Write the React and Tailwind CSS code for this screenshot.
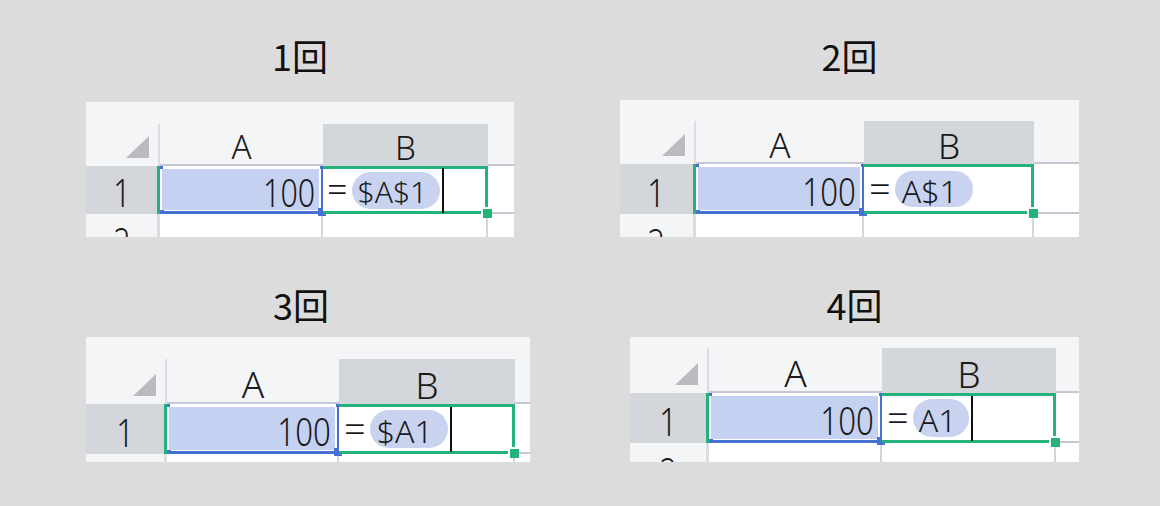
import React from "react";

const SANS = "font-['Noto_Sans','Noto_Sans_CJK_JP',sans-serif]";

function Triangle() {
  return (
    <svg width="23" height="22" viewBox="0 0 23 22" className="block">
      <polygon points="23,0 23,22 0,22" fill="#b9bbbe" />
    </svg>
  );
}

function Panel({ c }) {
  return (
    <div className={`${c.w} ${c.h} flex flex-col overflow-hidden bg-[#f4f5f7] ${SANS} font-light text-[#1a1a1a]`}>
      <div className={`${c.strip} shrink-0`} />
      {/* header row */}
      <div className={`${c.header} shrink-0 flex`}>
        <div className={`${c.rh} shrink-0 flex items-end justify-end pr-[9px] pb-[8px] border-r-2 border-[#dcdce2]`}>
          <Triangle />
        </div>
        <div className={`${c.a} shrink-0 flex items-center justify-center pt-[5px] ${c.hf} leading-none border-b-2 border-[#c6c6d4]`}>A</div>
        <div className={`${c.b} shrink-0 flex items-center justify-center pt-[5px] ${c.hf} leading-none bg-[#d3d6da]`}>B</div>
        <div className="flex-1 border-b-2 border-[#c6c6d4]" />
      </div>
      {/* row 1 */}
      <div className={`${c.row} shrink-0 flex`}>
        <div className={`${c.rh} shrink-0 flex items-center justify-center pt-[4px] bg-[#d3d6da] border-r-[3px] border-[#22b27a] ${c.vf} leading-none`}>
          <span className="inline-block scale-x-[0.8]">1</span>
        </div>
        <div className={`${c.a} shrink-0 relative bg-white border-r-2 border-b-[3px] border-[#4670d2] pl-[2px] pr-[2px] pt-[3px] pb-[1px]`}>
          <div className={`h-full bg-[#c5d1f0] flex items-center justify-end pr-[4px] pt-[4px] ${c.vf} leading-none`}>
            <span className="inline-block origin-right scale-x-[0.8]">100</span>
          </div>
          <div className="absolute left-0 top-0 w-[3px] h-[3px] bg-[#4670d2]" />
          <div className="absolute -right-[2px] top-0 w-[3px] h-[3px] bg-[#4670d2]" />
          <div className="absolute left-0 -bottom-[3px] w-[4px] h-[4px] bg-[#4670d2]" />
          <div className="absolute -right-[5px] -bottom-[5px] w-[8px] h-[8px] bg-[#4670d2]" />
        </div>
        <div className={`${c.b} shrink-0 relative bg-white border-t-[3px] border-r-[3px] border-b-[3px] border-[#22b27a]`}>
          <div className={`h-full flex items-center ${c.fpl}`}>
            <span className={`${c.ef} leading-none pb-[2px]`}>=</span>
            <span className={`${c.pill} ml-[4px] rounded-full bg-[#c9d3f0] flex items-center ${c.ff} leading-none`}>
              <span className="pt-[3px]">{c.formula}</span>
            </span>
            {c.cursor && <span className="ml-[2px] w-[2px] h-[45px] shrink-0 bg-[#111]" />}
          </div>
          <div className="absolute -right-[7px] -bottom-[7px] w-[11px] h-[11px] bg-[#22b27a] border-l-2 border-t-2 border-white" />
        </div>
        <div className="flex-1 bg-white border-b-2 border-[#c6c6d4]" />
      </div>
      {/* row 2 */}
      <div className="h-[48px] shrink-0 flex">
        <div className={`${c.rh} shrink-0 flex items-start justify-center pt-[8px] bg-[#f4f5f7] border-r-[3px] border-[#dcdce2] ${c.vf} leading-none`}>
          <span className="inline-block scale-x-[0.8]">2</span>
        </div>
        <div className={`${c.a} shrink-0 bg-white border-r-2 border-[#d5d5dd]`} />
        <div className={`${c.b} shrink-0 bg-white border-r-2 border-[#d5d5dd]`} />
        <div className="flex-1 bg-white" />
      </div>
    </div>
  );
}

const P1 = {
  w: "w-[428px]", h: "h-[135px]", strip: "h-[22px]", header: "h-[42px]", row: "h-[48px]",
  rh: "w-[74px]", a: "w-[163px]", b: "w-[165px]",
  hf: "text-[33px]", vf: "text-[38px]", ff: "text-[30px]", ef: "text-[36px]", fpl: "pl-[4px]",
  pill: "h-[37px] pl-[6px] pr-[13px]", formula: "$A$1", cursor: true,
};
const P2 = {
  w: "w-[459px]", h: "h-[137px]", strip: "h-[21px]", header: "h-[43px]", row: "h-[50px]",
  rh: "w-[76px]", a: "w-[168px]", b: "w-[170px]",
  hf: "text-[35px]", vf: "text-[39px]", ff: "text-[32px]", ef: "text-[38px]", fpl: "pl-[5px]",
  pill: "h-[36px] pl-[7px] pr-[15px]", formula: "A$1", cursor: false,
};
const P3 = {
  w: "w-[444px]", h: "h-[125px]", strip: "h-[22px]", header: "h-[45px]", row: "h-[50px]",
  rh: "w-[81px]", a: "w-[172px]", b: "w-[176px]",
  hf: "text-[37px]", vf: "text-[39px]", ff: "text-[32px]", ef: "text-[38px]", fpl: "pl-[5px]",
  pill: "h-[38px] pl-[7px] pr-[15px]", formula: "$A1", cursor: true,
};
const P4 = {
  w: "w-[449px]", h: "h-[125px]", strip: "h-[11px]", header: "h-[45px]", row: "h-[50px]",
  rh: "w-[79px]", a: "w-[173px]", b: "w-[174px]",
  hf: "text-[37px]", vf: "text-[39px]", ff: "text-[32px]", ef: "text-[38px]", fpl: "pl-[5px]",
  pill: "h-[38px] pl-[6px] pr-[13px]", formula: "A1", cursor: true,
};

function Title({ children, extra = "" }) {
  return (
    <div className={`h-[36px] flex items-center justify-center text-[36px] leading-none text-[#111] font-normal font-['Noto_Sans_CJK_JP',sans-serif] ${extra}`}>
      {children}
    </div>
  );
}

export default function App() {
  return (
    <div className="w-[1160px] h-[506px] bg-[#dcdcdc] flex flex-col overflow-hidden">
      <div className="flex pt-[37px] h-[237px] items-start">
        <div className="ml-[86px] flex flex-col">
          <Title>1回</Title>
          <div className="mt-[29px]"><Panel c={P1} /></div>
        </div>
        <div className="ml-[106px] flex flex-col">
          <Title>2回</Title>
          <div className="mt-[27px]"><Panel c={P2} /></div>
        </div>
      </div>
      <div className="flex mt-[49px] items-start">
        <div className="ml-[86px] flex flex-col">
          <Title extra="pr-[14px]">3回</Title>
          <div className="mt-[15px]"><Panel c={P3} /></div>
        </div>
        <div className="ml-[100px] flex flex-col">
          <Title>4回</Title>
          <div className="mt-[15px]"><Panel c={P4} /></div>
        </div>
      </div>
    </div>
  );
}
